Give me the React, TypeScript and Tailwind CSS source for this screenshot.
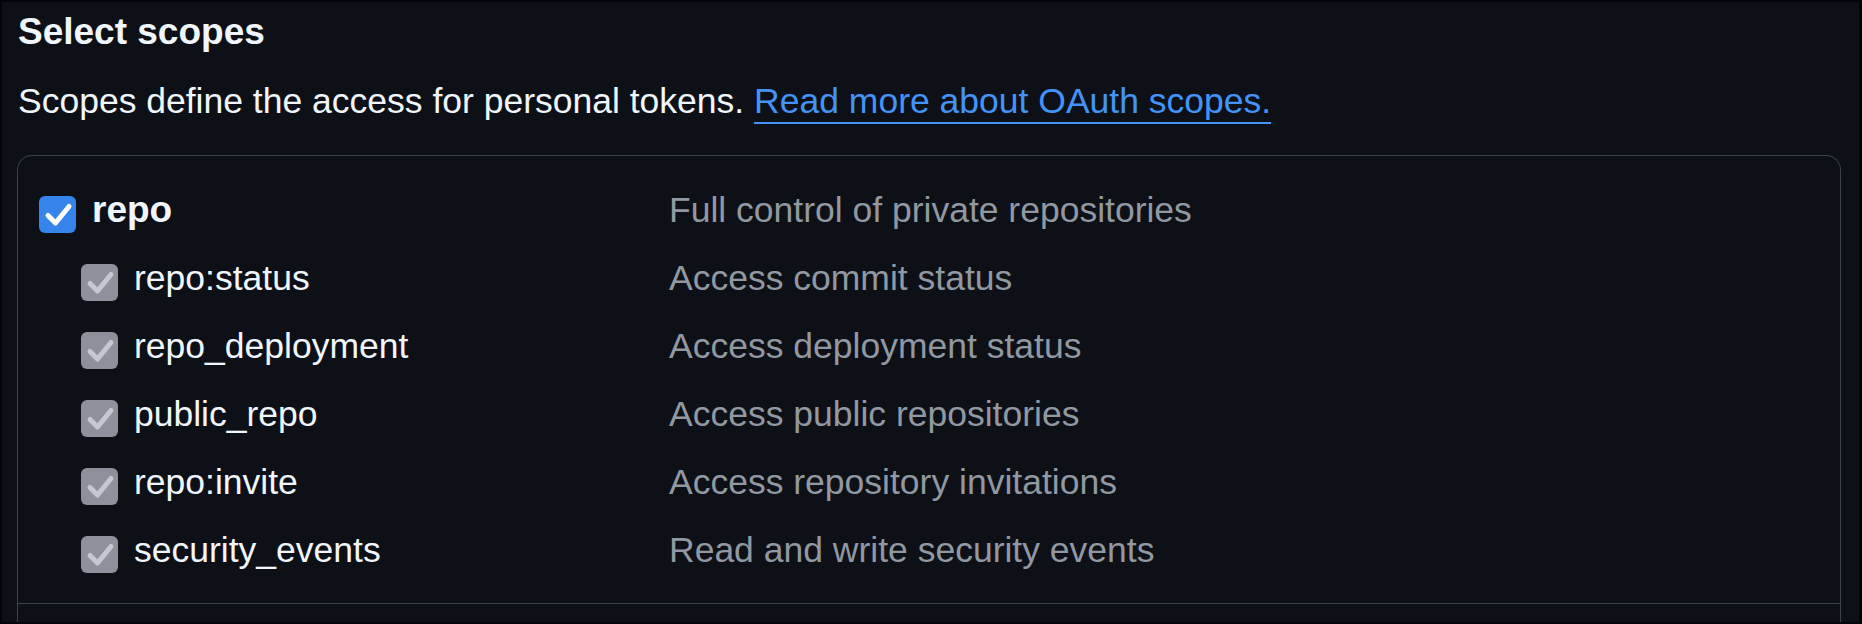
import React from "react";

type Scope = {
  name: string;
  description: string;
  parent?: boolean;
};

const scopes: Scope[] = [
  { name: "repo", description: "Full control of private repositories", parent: true },
  { name: "repo:status", description: "Access commit status" },
  { name: "repo_deployment", description: "Access deployment status" },
  { name: "public_repo", description: "Access public repositories" },
  { name: "repo:invite", description: "Access repository invitations" },
  { name: "security_events", description: "Read and write security events" },
];

// Checked box; the parent one is blue, the children are greyed out (disabled)
const CheckBox: React.FC<{ disabled?: boolean }> = ({ disabled }) => (
  <div
    className={`flex h-[37px] w-[37px] shrink-0 items-center justify-center rounded-[6px] ${
      disabled ? "bg-[#8f909b]" : "bg-[#3584ea]"
    }`}
  >
    <svg width="37" height="37" viewBox="0 0 37 37" fill="none">
      <path
        d="M9 19.5 L16.5 27 L30 10.5"
        stroke={disabled ? "#c6c7cf" : "#ffffff"}
        strokeWidth="5"
        strokeLinecap="round"
        strokeLinejoin="round"
      />
    </svg>
  </div>
);

const App: React.FC = () => {
  return (
    <div className="h-[624px] w-[1862px] overflow-hidden border-t-2 border-r-[3px] border-b-2 border-l-2 border-[#010409] bg-[#0d1117] font-['Liberation_Sans',Arial,sans-serif] text-[35.5px] text-[#f0f6fc]">
      {/* Heading + note */}
      <div className="pl-4 pt-1">
        <h2 className="text-[37px] leading-[52px] font-bold">Select scopes</h2>
        <p className="mt-[17px] leading-[52px]">
          Scopes define the access for personal tokens.{" "}
          <a
            href="#"
            className="text-[#4493f8] underline decoration-2 underline-offset-[9px]"
          >
            Read more about OAuth scopes.
          </a>
        </p>
      </div>

      {/* Scope list box */}
      <div className="ml-[15px] mt-[28px] h-[500px] w-[1824px] rounded-t-[15px] border border-b-0 border-[#3d444d]">
        <div className="pt-[23px] pb-[16px] border-b border-[#3d444d]">
          {scopes.map((s) => (
            <div key={s.name} className="flex h-[68px] pl-[21px]">
              <div
                className={`flex w-[630px] items-start ${
                  s.parent ? "" : "pl-[42px]"
                }`}
              >
                <div className="mt-[17px]">
                  <CheckBox disabled={!s.parent} />
                </div>
                <span
                  className={`ml-[16px] mt-[5px] leading-[52px] ${
                    s.parent ? "text-[37px] font-bold" : ""
                  }`}
                >
                  {s.name}
                </span>
              </div>
              <span className="mt-[5px] leading-[52px] text-[#9198a1]">
                {s.description}
              </span>
            </div>
          ))}
        </div>
      </div>
    </div>
  );
};

export default App;
